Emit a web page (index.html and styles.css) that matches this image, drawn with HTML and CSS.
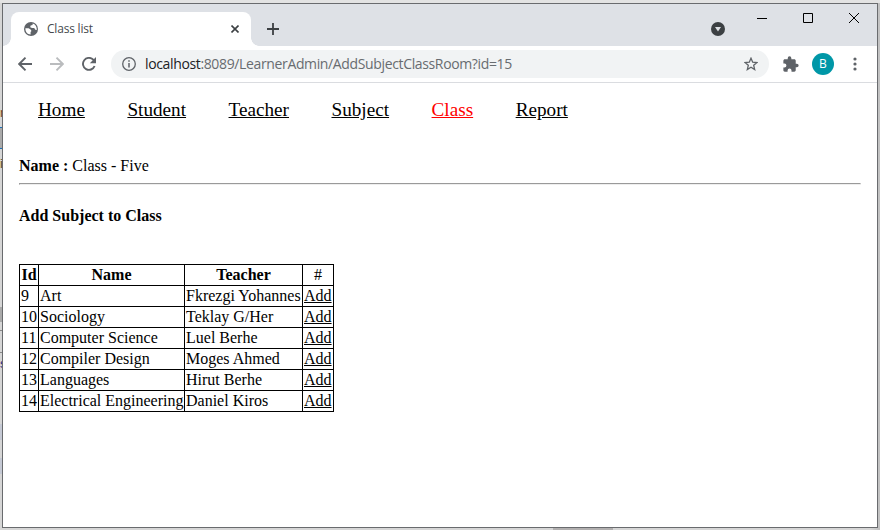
FILE: index.html
```html
<!DOCTYPE html>
<html lang="en">
<head>
<meta charset="utf-8">
<title>Class list</title>
<link rel="stylesheet" href="styles.css">
</head>
<body>
<div class="behind" aria-hidden="true"><span class="frag frag-n">n</span><span class="frag frag-lines"></span><span class="frag frag-i">i</span><span class="frag frag-block"></span><span class="frag frag-row"></span><span class="frag frag-s">s</span><span class="frag frag-blue"></span><span class="frag frag-blue second"></span><span class="frag frag-bottom"></span></div>
<div class="window">
  <header class="tabbar">
    <div class="tab">
      <svg class="globe" width="14" height="14" viewBox="0 0 14 14"><circle cx="7" cy="7" r="7" fill="#5f6368"/><path d="M1.400 6.200l3.200.1 2 1.300.9 1.400-.9 1.100v2.400C3.400 12.300 1.200 9.700 1.400 6.200zM8.700 1.500l-.2 1.500-1.900.5-.4 1.700 1.800.9 2.200-.1 1.100 1.700 1.500.2C13 4.800 11.200 2.200 8.700 1.500z" fill="#fff"/></svg>
      <span class="tab-title">Class list</span>
      <svg class="tab-close" width="8" height="8" viewBox="0 0 8 8"><path d="M.5.5l7 7m0-7l-7 7" stroke="#3c4043" stroke-width="1.6"/></svg>
    </div>
    <svg class="plus" width="12" height="12" viewBox="0 0 12 12"><path d="M6 0v12M0 6h12" stroke="#3c4043" stroke-width="1.8"/></svg>
    <svg class="search-tabs" width="14" height="14" viewBox="0 0 14 14"><circle cx="7" cy="7" r="7" fill="#3c4043"/><path d="M4 5h6L7 9.500z" fill="#dee1e6"/></svg>
    <div class="controls">
      <svg width="10" height="10" viewBox="0 0 10 10"><path d="M0 5.500h10" stroke="#000"/></svg>
      <svg width="10" height="10" viewBox="0 0 10 10"><path d="M.5.5h9v9h-9z" fill="none" stroke="#000"/></svg>
      <svg width="10" height="10" viewBox="0 0 10 10"><path d="M0 0l10 10M10 0L0 10" stroke="#000"/></svg>
    </div>
  </header>
  <div class="toolbar">
    <svg class="back" width="14" height="14" viewBox="0 0 14 14"><path d="M14 7H1.500M7.500.7L1.200 7l6.300 6.300" fill="none" stroke="#5f6368" stroke-width="1.9"/></svg>
    <svg class="forward" width="14" height="14" viewBox="0 0 14 14"><path d="M0 7h12.500M6.500.7L12.800 7l-6.300 6.300" fill="none" stroke="#babcbe" stroke-width="1.900"/></svg>
    <svg class="reload" width="14" height="14" viewBox="0 0 14 14"><path d="M12.600 9A6 6 0 1 1 11.300 2.700L12.400 4" fill="none" stroke="#5f6368" stroke-width="1.900"/><path d="M14 0v6.200H7.800z" fill="#5f6368"/></svg>
    <div class="omnibox">
      <svg width="14" height="14" viewBox="0 0 14 14"><circle cx="7" cy="7" r="6.300" fill="none" stroke="#5f6368" stroke-width="1.300"/><path d="M7 6v4.500M7 3.300v1.500" stroke="#5f6368" stroke-width="1.500"/></svg>
      <span class="url"><b>localhost</b>:8089/LearnerAdmin/AddSubjectClassRoom?id=15</span>
      <svg class="star" width="14" height="14" viewBox="0 0 14 14"><path d="M7 1.200l1.700 4 4.300.3-3.300 2.800 1 4.300L7 10.300l-3.700 2.300 1-4.300L1 5.500l4.300-.3z" fill="none" stroke="#5f6368" stroke-width="1.300"/></svg>
    </div>
    <svg class="puzzle" width="16" height="16" viewBox="1.500 0.500 22 22"><path d="M20.500 11H19V7c0-1.100-.9-2-2-2h-4V3.500a2.500 2.500 0 0 0-5 0V5H4c-1.100 0-2 .9-2 2v3.800h1.500a2.700 2.700 0 0 1 0 5.400H2V20c0 1.100.9 2 2 2h3.800v-1.500a2.700 2.700 0 0 1 5.400 0V22H17c1.100 0 2-.9 2-2v-4h1.500a2.500 2.500 0 0 0 0-5z" fill="#5f6368"/></svg>
    <span class="avatar">B</span>
    <svg class="dots" width="4" height="14" viewBox="0 0 4 14"><g fill="#5f6368"><circle cx="2" cy="2" r="1.600"/><circle cx="2" cy="7" r="1.600"/><circle cx="2" cy="12" r="1.600"/></g></svg>
  </div>
  <main class="page">
    <nav class="nav"><a>Home</a><a>Student</a><a>Teacher</a><a>Subject</a><a class="active">Class</a><a>Report</a></nav>
    <p class="name"><b>Name :</b> Class - Five</p>
    <hr>
    <h4>Add Subject to Class</h4>
    <table>
      <colgroup><col class="c-id"><col class="c-name"><col class="c-teacher"><col class="c-add"></colgroup>
      <tr><th>Id</th><th>Name</th><th>Teacher</th><td class="hash">#</td></tr>
      <tr><td>9</td><td>Art</td><td>Fkrezgi Yohannes</td><td><a>Add</a></td></tr>
      <tr><td>10</td><td>Sociology</td><td>Teklay G/Her</td><td><a>Add</a></td></tr>
      <tr><td>11</td><td>Computer Science</td><td>Luel Berhe</td><td><a>Add</a></td></tr>
      <tr><td>12</td><td>Compiler Design</td><td>Moges Ahmed</td><td><a>Add</a></td></tr>
      <tr><td>13</td><td>Languages</td><td>Hirut Berhe</td><td><a>Add</a></td></tr>
      <tr><td>14</td><td>Electrical Engineering</td><td>Daniel Kiros</td><td><a>Add</a></td></tr>
    </table>
  </main>
</div>
</body>
</html>
```
FILE: styles.css
```css
* { box-sizing: border-box; }
body { margin: 0; width: 880px; height: 530px; padding: 3px 2px 2px; overflow: hidden; background: linear-gradient(90deg, #d6d6d6, #d6d6d6 870px, #c0c0c0); position: relative; }
body::before { content: ""; position: absolute; left: 0; top: 0; width: 880px; height: 3px; background: #e3e3e3; }
svg { display: block; flex: none; }
.window { position: relative; width: 876px; height: 525px; border: 1px solid #696b6e; background: #fff; }
.frag { position: absolute; left: 0; width: 2px; overflow: hidden; font: 13px "Liberation Sans", sans-serif; }
.frag-n { top: 105px; color: #7a4b1b; }
.frag-lines { top: 127px; height: 22px; background: #aaa; border-top: 1px solid #1a6fb8; border-bottom: 1px solid #1a6fb8; }
.frag-i { top: 156px; color: #5d4d20; }
.frag-block { top: 307px; height: 15px; background: #aaa; }
.frag-row { top: 330px; height: 23px; border-top: 1px solid #888; border-bottom: 1px solid #888; }
.frag-s { top: 356px; color: #2a2a80; }
.frag-blue { top: 424px; height: 16px; background: #c5c9d4; }
.frag-blue.second { top: 458px; }
.frag-bottom { left: 553px; top: 528px; width: 60px; height: 2px; background: #b2b0b0; }

.tabbar { display: flex; height: 42px; background: #dee1e6; padding: 8px 18px 0 8px; }
.tab { position: relative; display: flex; align-items: center; width: 240px; height: 34px; padding: 0 12px 0 13px; background: #fff; border-radius: 8px 8px 0 0; }
.tab::before, .tab::after { content: ""; position: absolute; bottom: 0; width: 8px; height: 8px; }
.tab::before { left: -8px; background: radial-gradient(circle at 0 0, transparent 7.5px, #fff 8px); }
.tab::after { right: -8px; background: radial-gradient(circle at 100% 0, transparent 7.5px, #fff 8px); }
.tab-title { margin-left: 9px; font: 12px/16px "Open Sans", sans-serif; letter-spacing: -0.3px; color: #45494d; }
.tab-title { letter-spacing: -0.2px; }
.tab-close { margin-left: auto; }
.plus { margin: 11px 0 0 16px; }
.search-tabs { margin: 10px 0 0 auto; }
.controls { display: flex; gap: 36px; margin: 1px 0 0 32px; }

.toolbar { display: flex; align-items: center; height: 37px; padding: 0 20px 0 15px; border-bottom: 1px solid #dadce0; }
.forward { margin-left: 18px; }
.reload { margin-left: 18px; }
.omnibox { display: flex; align-items: center; width: 658px; height: 28px; margin-left: 15px; padding: 0 11px; border-radius: 14px; background: #f1f3f4; }
.url { margin-left: 9px; font: 14px/20px "Open Sans", sans-serif; letter-spacing: -0.36px; color: #686c70; white-space: nowrap; }
.url b { font-weight: 400; color: #202124; }
.star { margin-left: auto; }
.puzzle { margin-left: 14px; }
.avatar { width: 22px; height: 22px; margin-left: 13px; border-radius: 50%; background: #0097a7; color: #fff; font: 12px/22px "Open Sans", sans-serif; text-align: center; }
.dots { margin-left: auto; }

.page { padding: 16px 16px 0; font: 16px/18px "Liberation Serif", serif; color: #000; }
.nav { display: flex; gap: 42.500px; padding-left: 19px; font-size: 19.200px; line-height: 22px; }
a { text-decoration: underline; color: #000; }
.nav .active { color: #f00; }
.name { margin: 36px 0 0; }
hr { margin: 8px 0 21px; border: 1px solid; border-color: #9a9a9a #eee #eee #9a9a9a; }
h4 { margin: 0; font-size: 16px; line-height: 20px; }
table { width: 315px; margin-top: 38px; table-layout: fixed; border-collapse: collapse; }
.c-id { width: 19px; }
.c-name { width: 146px; }
.c-teacher { width: 118px; }
.c-add { width: 31px; }
th, td { height: 21px; padding: 1px; border: 1px solid #000; line-height: 18px; white-space: nowrap; }
.hash { text-align: center; }
```
